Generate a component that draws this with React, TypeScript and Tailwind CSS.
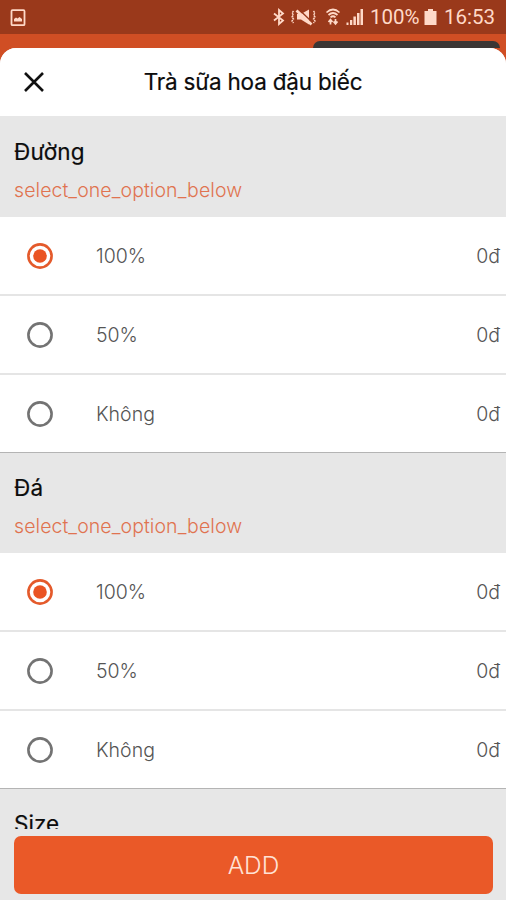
import { useState } from "react";

type Option = { label: string; price: string };
type Group = { id: string; title: string; options: Option[] };

const OPTIONS: Option[] = [
  { label: "100%", price: "0đ" },
  { label: "50%", price: "0đ" },
  { label: "Không", price: "0đ" },
];

const GROUPS: Group[] = [
  { id: "sugar", title: "Đường", options: OPTIONS },
  { id: "ice", title: "Đá", options: OPTIONS },
];

const StatusBar = () => (
  <div className="flex h-[34px] shrink-0 items-center justify-between bg-[#9a391b] pl-[10px] pr-[9px] text-[#ffd9c8]">
    <svg width="16" height="18" viewBox="0 0 16 18" fill="none" className="mt-px">
      <rect x="1.5" y="1.2" width="13" height="15" rx="1" stroke="currentColor" strokeWidth="1.8" />
      <path d="M4 12.500V10l2-1.500 1.500 1L9.500 8l2.500 2v2.500z" fill="currentColor" />
    </svg>
    <div className="flex items-center font-['Roboto',sans-serif] text-[20.5px] leading-[34px]">
      {/* bluetooth */}
      <svg width="14" height="18" viewBox="0 0 14 18" fill="none" stroke="currentColor" strokeWidth="1.8">
        <path d="M2 5.500l9 7L7 16V2l4 3.500-9 7" />
      </svg>
      {/* vibrate / muted */}
      <svg width="27" height="18" viewBox="0 0 27 18" className="ml-[4px]">
        <path d="M7 6h4l8-4.500v15l-8-5H7z" fill="currentColor" />
        <path d="M9 1.500l14.500 14" stroke="#9a391b" strokeWidth="1.500" />
        <path d="M6.500 2.500l15 14" stroke="currentColor" strokeWidth="2.800" />
        <path
          d="M3.500 3L2 5l1.500 2L2 9l1.500 2L2 13l1.500 2M23.500 3L25 5l-1.500 2L25 9l-1.500 2 1.500 2-1.500 2"
          fill="none"
          stroke="currentColor"
          strokeWidth="1.4"
          strokeDasharray="2 0.8"
        />
      </svg>
      {/* wifi */}
      <svg width="16" height="18" viewBox="0 0 16 18" fill="none" stroke="currentColor" strokeWidth="1.7" className="ml-[8px]">
        <path d="M1.500 4.500Q8-1.500 14.500 4.500M3.500 7Q8 3 12.500 7M5.500 9.300Q8 7.200 10.500 9.300" />
        <path d="M5.500 16.500v-5M3.500 14l2-2.500 2 2.500M10.500 11v5M8.500 13.500l2 2.500 2-2.500" />
      </svg>
      {/* signal */}
      <svg width="18" height="18" viewBox="0 0 18 18" fill="currentColor" className="ml-[5px]">
        <path d="M0.500 14.500h2V17h-2zM4 12h2.300v5H4zM7.400 8.500h2.500V17H7.400zM11 5h2.500v12H11zM14.500 1H17v16h-2.500z" />
      </svg>
      <span className="ml-[6px] w-[54px]">100%</span>
      <svg width="13" height="18" viewBox="0 0 13 18" fill="currentColor">
        <path d="M4 1h5v2h3.500v14H0.500V3H4z" />
      </svg>
      <span className="ml-[7px] w-[53px]">16:53</span>
    </div>
  </div>
);

const Radio = ({ checked }: { checked: boolean }) => (
  <svg width="26" height="26" viewBox="0 0 26 26" fill="none">
    <circle cx="13" cy="13" r="11.600" stroke={checked ? "#e45a2b" : "#737373"} strokeWidth="2.600" />
    {checked && <circle cx="13" cy="13" r="6.800" fill="#ea5423" />}
  </svg>
);

const OptionGroup = ({ group }: { group: Group }) => {
  const [selected, setSelected] = useState(0);

  return (
    <section className="flex h-[336px] shrink-0 flex-col">
      <div className="h-[100px] bg-[#e7e7e7] pl-[14px] pt-[20px]">
        <h2 className="text-[22.5px] leading-[30px] tracking-[0.15px] text-[#0c0c0c] [-webkit-text-stroke:0.2px]">
          {group.title}
        </h2>
        <p className="mt-[9px] text-[19.5px] font-light leading-[28px] tracking-[0.07px] text-[#e07350]">
          select_one_option_below
        </p>
      </div>
      <div className="divide-y-2 divide-[#e5e5e5] border-b border-[#b4b4b4]">
        {group.options.map((option, i) => (
          <button
            key={option.label}
            onClick={() => setSelected(i)}
            className="flex h-[79px] w-full items-center bg-white pl-[27px] pr-[6px] text-[19.5px] font-light text-[#555] last:h-[77px]"
          >
            <Radio checked={selected === i} />
            <span className="ml-[43px] mt-[2px]">{option.label}</span>
            <span className="ml-auto mt-[2px]">{option.price}</span>
          </button>
        ))}
      </div>
    </section>
  );
};

const App = () => {
  return (
    <div className="flex h-[900px] w-[506px] flex-col overflow-hidden bg-[#d04e24] font-['Inter',sans-serif]">
      <StatusBar />
      <div className="flex h-[14px] shrink-0 items-end justify-end pr-[6px]">
        <div className="h-[7px] w-[187px] rounded-t-[7px] bg-[#3b3634]" />
      </div>
      <main className="flex min-h-0 flex-1 flex-col overflow-hidden rounded-t-[16px] bg-[#e7e7e7]">
        <header className="grid h-[68px] shrink-0 grid-cols-[68px_1fr_68px] items-center bg-white">
          <button aria-label="Close" className="flex justify-center">
            <svg width="20" height="20" viewBox="0 0 20 20" stroke="#111" strokeWidth="2.600">
              <path d="M1 1l18 18M19 1L1 19" />
            </svg>
          </button>
          <h1 className="text-center text-[22.5px] tracking-[-0.2px] text-[#0c0c0c] [-webkit-text-stroke:0.2px]">
            Trà sữa hoa đậu biếc
          </h1>
        </header>
        <div className="flex min-h-0 flex-1 flex-col overflow-hidden pt-px">
          {GROUPS.map((group) => (
            <OptionGroup key={group.id} group={group} />
          ))}
          <div className="pl-[14px] pt-[20px]">
            <h2 className="text-[22.5px] leading-[30px] text-[#0c0c0c] [-webkit-text-stroke:0.2px]">Size</h2>
          </div>
        </div>
        <footer className="h-[71px] shrink-0 bg-[#e7e7e7] pl-[14px] pr-[13px] pt-[7px]">
          <button className="h-[58px] w-full rounded-[7px] bg-[#ea5928] text-[24.5px] font-light text-[#ffe2d5]">
            ADD
          </button>
        </footer>
      </main>
    </div>
  );
};

export default App;
